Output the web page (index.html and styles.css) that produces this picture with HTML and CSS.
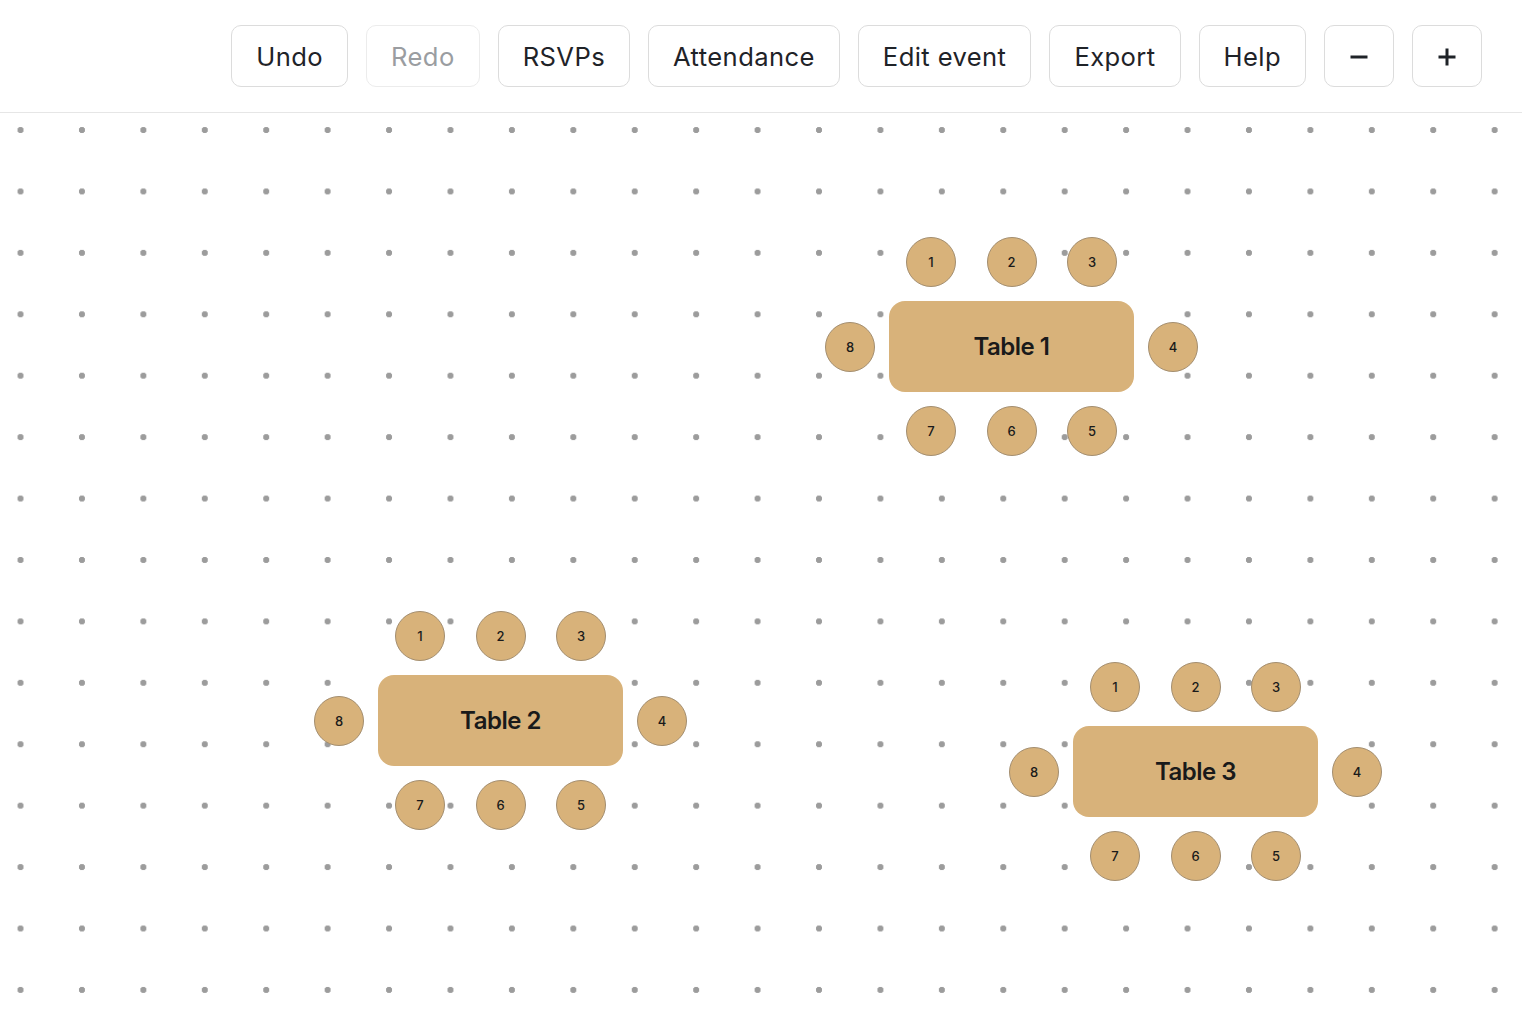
FILE: index.html
```html
<!DOCTYPE html>
<html lang="en">
    <head>
        <link rel="stylesheet" href="styles.css">
    </head>
    <body>

        <div class="toolbar">
            <button class="btn">Undo</button>
            <button class="btn" disabled>Redo</button>
            <button class="btn">RSVPs</button>
            <button class="btn">Attendance</button>
            <button class="btn">Edit event</button>
            <button class="btn">Export</button>
            <button class="btn">Help</button>
            <button class="btn btn_icon">
                <svg width="20" height="20" viewBox="0 0 20 20"><path d="M1.5 11h17" stroke="#1f2328" stroke-width="3"/></svg>
            </button>
            <button class="btn btn_icon">
                <svg width="20" height="20" viewBox="0 0 20 20"><path d="M1.5 11h17M10 2.5v17" stroke="#1f2328" stroke-width="3"/></svg>
            </button>
        </div>

        <div class="canvas">

            <div class="group" id="table_1">
                <div></div>
                <div class="row"><span class="chair">1</span><span class="chair">2</span><span class="chair">3</span></div>
                <div></div>
                <span class="chair">8</span>
                <div class="table">Table 1</div>
                <span class="chair">4</span>
                <div></div>
                <div class="row"><span class="chair">7</span><span class="chair">6</span><span class="chair">5</span></div>
                <div></div>
            </div>

            <div class="group" id="table_2">
                <div></div>
                <div class="row"><span class="chair">1</span><span class="chair">2</span><span class="chair">3</span></div>
                <div></div>
                <span class="chair">8</span>
                <div class="table">Table 2</div>
                <span class="chair">4</span>
                <div></div>
                <div class="row"><span class="chair">7</span><span class="chair">6</span><span class="chair">5</span></div>
                <div></div>
            </div>

            <div class="group" id="table_3">
                <div></div>
                <div class="row"><span class="chair">1</span><span class="chair">2</span><span class="chair">3</span></div>
                <div></div>
                <span class="chair">8</span>
                <div class="table">Table 3</div>
                <span class="chair">4</span>
                <div></div>
                <div class="row"><span class="chair">7</span><span class="chair">6</span><span class="chair">5</span></div>
                <div></div>
            </div>

        </div>

    </body>
</html>
```

FILE: styles.css
```css
body{
    margin: 0;
    background: #ffffff;
    font-family: "Inter", "Liberation Sans", sans-serif;
    color: #1f2328;
    overflow: hidden;
}

.toolbar{
    height: 113px;
    box-sizing: border-box;
    border-bottom: 1px solid #e6e6e6;
    display: flex;
    justify-content: flex-end;
    align-items: flex-start;
    gap: 18px;
    padding-top: 25px;
    padding-right: 40px;
}

.btn{
    height: 62px;
    padding: 0 24px;
    font-family: inherit;
    font-size: 25.6px;
    letter-spacing: 0.4px;
    color: #1f2328;
    background: #ffffff;
    border: 1.5px solid #dcdcdc;
    border-radius: 10px;
    display: flex;
    align-items: center;
    justify-content: center;
}

.btn:disabled{
    color: #9a9da1;
    border-color: #ececec;
}

.btn_icon{
    width: 70px;
    padding: 0;
}

.canvas{
    position: relative;
    height: 911px;
    background-image: radial-gradient(circle, #9c9c9c 0, #9c9c9c 2.8px, transparent 3.5px);
    background-size: 61.43px 61.43px;
    background-position: -10.2px -13.7px;
}

.group{
    position: absolute;
    display: grid;
    grid-template-columns: 50px 245px 50px;
    grid-template-rows: 50px 91px 50px;
    gap: 14px;
    align-items: center;
}

#table_1{ left: 825px; top: 124px; }
#table_2{ left: 314px; top: 498px; }
#table_3{ left: 1009px; top: 549px; }

.row{
    display: flex;
    justify-content: space-between;
    padding: 0 17px;
}

.table{
    height: 91px;
    background: #d8b27a;
    border-radius: 16px;
    display: flex;
    align-items: center;
    justify-content: center;
    font-size: 24px;
    font-weight: 600;
    letter-spacing: -0.5px;
    color: #1a1a1a;
}

.chair{
    width: 50px;
    height: 50px;
    box-sizing: border-box;
    border-radius: 50%;
    background: #d8b27a;
    border: 1.5px solid #a38e70;
    display: flex;
    align-items: center;
    justify-content: center;
    font-size: 13px;
    font-weight: 500;
    color: #1a1a1a;
}
```
